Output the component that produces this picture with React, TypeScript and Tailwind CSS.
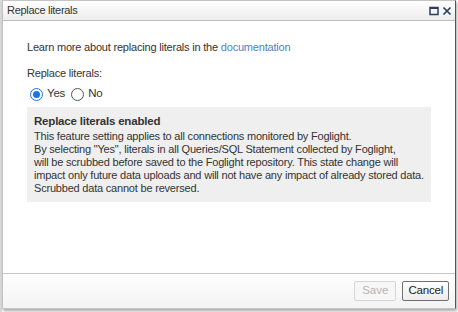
import { useState } from 'react';

const font = { fontFamily: '"Liberation Sans", Arial, sans-serif' };

const Radio = ({ checked, label, onClick }: { checked: boolean; label: string; onClick: () => void }) => (
  <button type="button" onClick={onClick} className="flex items-center gap-[4px] text-[11.5px] text-[#333]">
    <span
      className={`w-[13px] h-[13px] rounded-full border flex items-center justify-center bg-white ${
        checked ? 'border-[#1a73e8]' : 'border-[#555]'
      }`}
    >
      {checked && <span className="w-[7px] h-[7px] rounded-full bg-[#1a73e8]" />}
    </span>
    <span className="leading-[13px] -mt-[3px]">{label}</span>
  </button>
);

export default function App() {
  const [enabled, setEnabled] = useState(true);

  return (
    <div className="w-[458px] h-[312px] bg-white flex overflow-hidden" style={font}>
      {/* page behind the dialog */}
      <div className="w-[2px] h-full bg-[#dcdcdc]" />

      {/* Dialog */}
      <div className="w-[454px] h-[309px] flex flex-col border border-[#c4c4c4] border-r-[#555] shadow-[1px_2px_3px_rgba(0,0,0,0.35)] bg-white">
        {/* Title bar */}
        <div className="h-[20px] flex items-center justify-between pl-[4px] pr-[3px] border-b border-[#bcbcbc] bg-gradient-to-b from-white to-[#ededed]">
          <span className="text-[11px] tracking-[-0.3px] text-[#333] leading-none">Replace literals</span>
          <div className="flex items-center gap-[3px]">
            <svg width="10" height="10" viewBox="0 0 10 10">
              <rect x="1" y="1.5" width="8" height="7" fill="none" stroke="#2b3f5c" strokeWidth="1.5" />
              <rect x="1" y="1" width="8" height="2" fill="#2b3f5c" />
            </svg>
            <svg width="10" height="10" viewBox="0 0 10 10">
              <path d="M1.5 1.5 L8.5 8.5 M8.5 1.5 L1.5 8.5" stroke="#2b3f5c" strokeWidth="1.7" />
            </svg>
          </div>
        </div>

        {/* Body */}
        <div className="flex-1 flex flex-col pl-[24px] pr-[24px] pt-[19px] text-[11px] tracking-[-0.2px]">
          <p className="text-[#333] leading-[14px]">
            Learn more about replacing literals in the{' '}
            <a href="#" className="text-[#4f82c4]">documentation</a>
          </p>
          <p className="mt-[12px] text-[#333] leading-[14px]">Replace literals:</p>
          <div className="mt-[8px] ml-[3px] flex items-center gap-[6px]">
            <Radio checked={enabled} label="Yes" onClick={() => setEnabled(true)} />
            <Radio checked={!enabled} label="No" onClick={() => setEnabled(false)} />
          </div>

          <div className="mt-[6px] bg-[#efefef] pl-[7px] pr-[4px] pt-[7px] pb-[7px] text-[#333]">
            <p className="text-[11.5px] font-bold leading-[14px]">Replace literals enabled</p>
            <p className="mt-[2px] text-[11px] leading-[13px]">
              This feature setting applies to all connections monitored by Foglight.
              <br />
              By selecting "Yes", literals in all Queries/SQL Statement collected by Foglight,
              <br />
              will be scrubbed before saved to the Foglight repository. This state change will
              <br />
              impact only future data uploads and will not have any impact of already stored data.
              <br />
              Scrubbed data cannot be reversed.
            </p>
          </div>
        </div>

        {/* Footer */}
        <div className="h-[35px] border-t border-[#c8c8c8] bg-gradient-to-b from-white to-[#f3f3f3] flex items-center justify-end gap-[6px] pr-[6px] pb-[1px]">
          <button
            type="button"
            disabled
            className="h-[20px] px-[7px] text-[11.5px] text-[#b4b4b4] border border-[#d6d6d6] rounded-[2px] bg-[#f7f7f7]"
          >
            Save
          </button>
          <button
            type="button"
            className="h-[20px] px-[5px] text-[11.5px] tracking-[-0.2px] text-[#222] border border-[#707070] rounded-[2px] bg-gradient-to-b from-white to-[#ececec]"
          >
            Cancel
          </button>
        </div>
      </div>
    </div>
  );
}
